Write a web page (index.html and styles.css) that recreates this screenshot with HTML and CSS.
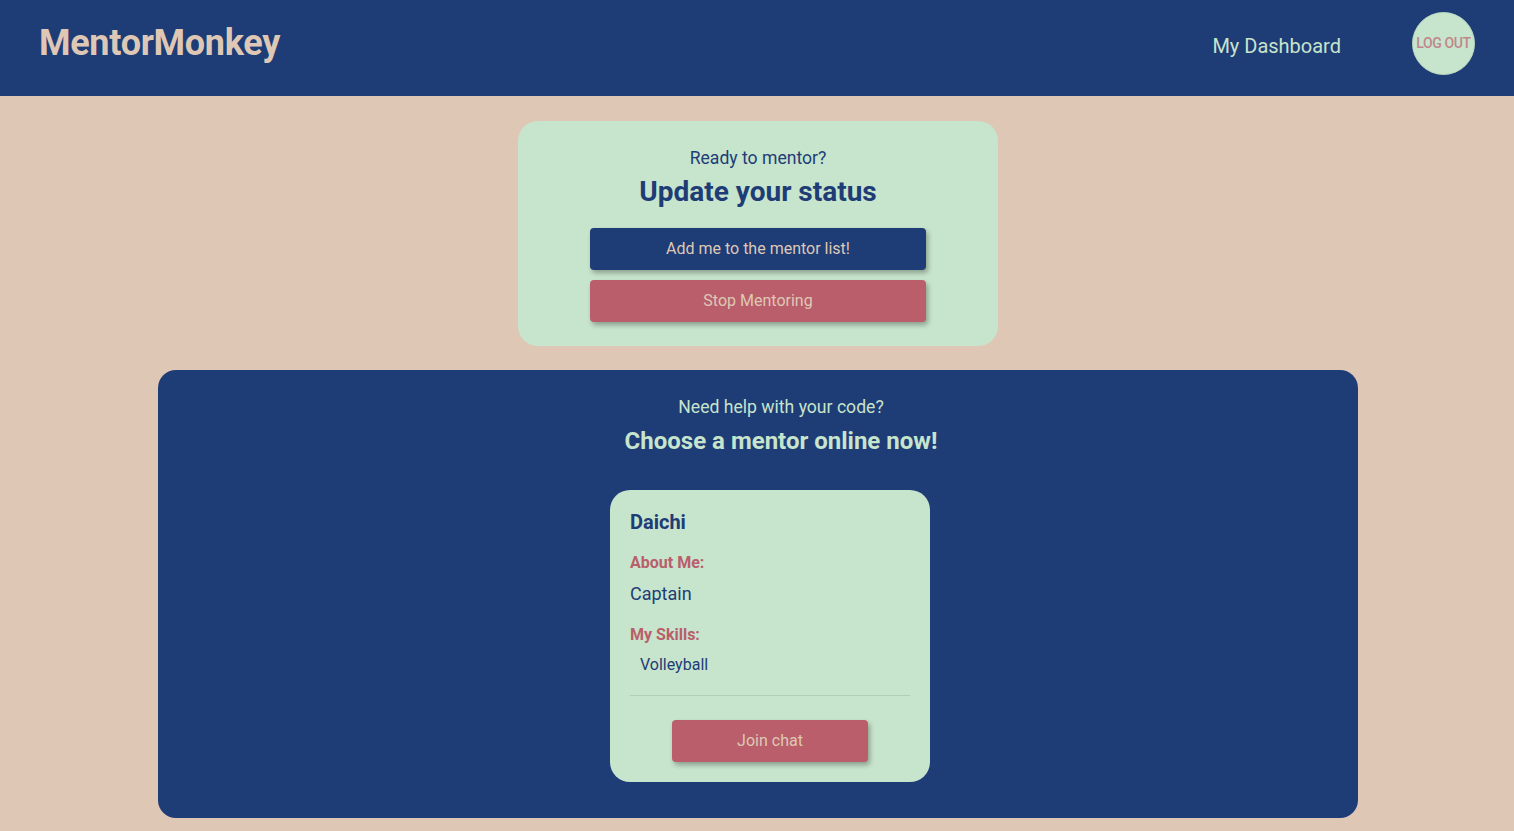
FILE: index.html
```html
<!DOCTYPE html>
<html>
<head>
<meta charset="utf-8">
<link rel="stylesheet" href="styles.css">
</head>
<body>
<header class="topbar">
  <div class="logo">MentorMonkey</div>
  <nav class="nav">
    <a class="nav-link" href="#">My Dashboard</a>
    <button class="logout">LOG OUT</button>
  </nav>
</header>
<main class="main">
  <section class="status-card">
    <p class="status-sub">Ready to mentor?</p>
    <h2 class="status-title">Update your status</h2>
    <button class="btn btn-navy">Add me to the mentor list!</button>
    <button class="btn btn-rose">Stop Mentoring</button>
  </section>
  <section class="mentors">
    <p class="mentors-sub">Need help with your code?</p>
    <h2 class="mentors-title">Choose a mentor online now!</h2>
    <div class="mentor-card">
      <h3 class="mentor-name">Daichi</h3>
      <div class="label">About Me:</div>
      <div class="about">Captain</div>
      <div class="label">My Skills:</div>
      <ul class="skills"><li>Volleyball</li></ul>
      <hr class="divider">
      <div class="card-actions"><button class="btn btn-rose btn-join">Join chat</button></div>
    </div>
  </section>
</main>
</body>
</html>
```
FILE: styles.css
```css
* { box-sizing: border-box; }
html, body { margin: 0; padding: 0; }
body {
  background: #dec8b5;
  font-family: Roboto, "Liberation Sans", Arial, sans-serif;
  color: #1e3c76;
}
.topbar {
  height: 96px;
  background: #1e3c76;
  display: flex;
  align-items: center;
  justify-content: space-between;
  padding: 0 39px 0 39px;
}
.logo {
  color: #dec8b5;
  font-size: 36px;
  font-weight: 700;
  margin-top: -10px;
  letter-spacing: -0.3px;
}
.nav {
  display: flex;
  align-items: center;
  gap: 71px;
  margin-top: -10px;
}
.nav-link {
  color: #c7e4cc;
  font-size: 20px;
  text-decoration: none;
  margin-top: 6px;
}
.logout {
  width: 63px;
  height: 63px;
  border-radius: 50%;
  background: #c7e4cc;
  border: 1px solid #b8d6bd;
  color: #c0868b;
  font-family: Roboto, "Liberation Sans", sans-serif;
  font-size: 14px;
  font-weight: 500;
  padding: 0;
  white-space: nowrap;
  letter-spacing: -0.4px;
}
.main {
  display: flex;
  flex-direction: column;
  align-items: center;
  padding: 25px 0 0 2px;
  gap: 24px;
}
.status-card {
  width: 480px;
  height: 225px;
  background: #c7e4cc;
  border-radius: 20px;
  display: flex;
  flex-direction: column;
  align-items: center;
  padding-top: 27px;
}
.status-sub {
  margin: 0;
  font-size: 17.6px;
  line-height: 20px;
}
.status-title {
  margin: 8px 0 0;
  font-size: 28px;
  line-height: 32px;
  font-weight: 700;
}
.btn {
  width: 336px;
  height: 42px;
  border: none;
  border-radius: 4px;
  font-family: Roboto, "Liberation Sans", sans-serif;
  font-size: 16px;
  line-height: 41px;
  color: #dec8b5;
  box-shadow: 2px 3px 5px rgba(0,0,0,0.3);
  padding: 0 0 1px;
}
.btn-navy { background: #1e3c76; margin-top: 20px; }
.btn-rose { background: #b95e6a; }
.status-card .btn-rose { margin-top: 10px; }
.mentors {
  width: 1200px;
  height: 448px;
  background: #1e3c76;
  border-radius: 18px;
  display: flex;
  flex-direction: column;
  align-items: center;
  padding: 27px 0 0 46px;
}
.mentors-sub {
  margin: 0;
  color: #c7e4cc;
  font-size: 17.6px;
  line-height: 20px;
}
.mentors-title {
  margin: 9px 0 0;
  color: #c7e4cc;
  font-size: 24px;
  line-height: 30px;
  font-weight: 700;
}
.mentor-card {
  width: 320px;
  margin: 34px 22px 0 0;
  background: #c7e4cc;
  border-radius: 20px;
  padding: 20px 20px 20px;
}
.mentor-name {
  margin: 0;
  font-size: 20px;
  line-height: 24px;
  font-weight: 700;
}
.label {
  color: #b95e6a;
  font-weight: 700;
  font-size: 16px;
  line-height: 20px;
  margin-top: 19px;
}
.about {
  font-size: 18px;
  line-height: 24px;
  margin-top: 9px;
}
.skills {
  list-style: none;
  margin: 10px 0 0;
  padding: 0 0 0 10px;
  font-size: 16px;
  line-height: 20px;
}
.divider {
  border: none;
  border-top: 1px solid #aecfb4;
  margin: 20px 0 0;
}
.card-actions {
  display: flex;
  justify-content: center;
  margin-top: 24px;
}
.btn-join { width: 196px; }
```
